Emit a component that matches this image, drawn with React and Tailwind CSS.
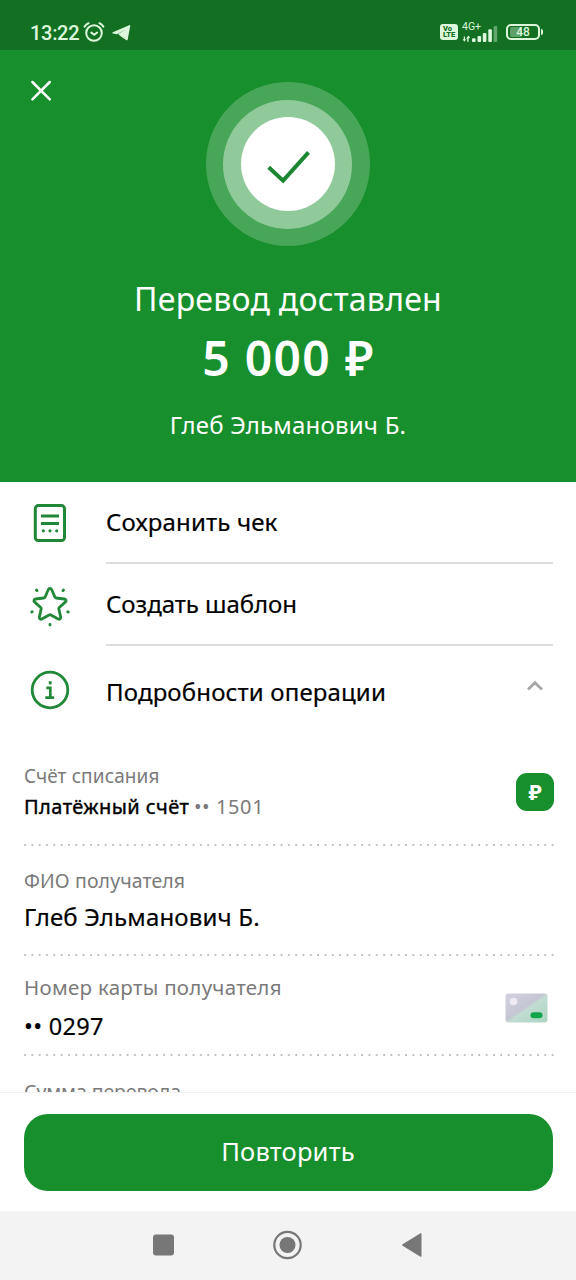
import React from "react";

function StatusBar() {
  return (
    <div className="flex h-[50px] shrink-0 items-start justify-between bg-[#137023] pl-[30px] pr-[33px] pt-[20px] text-[#dcf7dc]">
      <div className="flex h-6 items-center">
        <span className="w-[53px] whitespace-nowrap pt-px font-[Roboto] text-[20px] font-medium leading-6 tracking-[-0.3px]">13:22</span>
        <svg className="mt-[-1px] h-[22px] w-[22px]" viewBox="0 0 22 22" fill="none" stroke="currentColor" strokeWidth="2" strokeLinecap="round">
          <circle cx="11" cy="12" r="7.8" />
          <path d="M8.3 11.6l2.9 2.1 3-2.2M1.6 5.6A10 10 0 0 1 5.6 2.2M20.4 5.6a10 10 0 0 0-4-3.4" />
        </svg>
        <svg className="ml-[7px] mt-px h-[18px] w-[19px]" viewBox="0 0 19 18" fill="currentColor">
          <path d="M.8 8.3 17.2 1.2c.7-.3 1.2.1 1 .9l-2.5 13.3c-.2.9-.8 1.1-1.5.6l-4.9-3.3L6.1 10 14 5.2 4.9 10.3.8 9.4c-.6-.3-.6-.8 0-1.1z" />
        </svg>
      </div>
      <div className="flex h-6 items-center">
        <div className="flex h-[16px] w-[18px] flex-col items-center justify-center rounded-[3px] bg-[#dcf7dc] font-[Roboto] text-[7.5px] font-black leading-[6.5px] text-[#137023]">
          <span className="self-start pl-[3px]">Vo</span>
          <span>LTE</span>
        </div>
        <div className="ml-[4px] flex h-[22px] w-[37px] flex-col">
          <span className="h-[8px] whitespace-nowrap font-[Roboto] text-[10.5px] leading-[12px]">4G+</span>
          <svg className="mt-[-4px] h-[18px] w-[37px] shrink-0" viewBox="0 0 37 18" fill="currentColor">
            <path d="M1.8 11.5h1.2v2.8h1.2l-1.8 2.4-1.8-2.4h1.2zM5.2 16.7v-2.8H4.6V13l1.8-2.4L8.2 13H6.6v3.7z" />
            <rect x="10" y="13.2" width="3.6" height="3.8" rx="1" />
            <rect x="15.5" y="11" width="3.6" height="6" rx="1" />
            <rect x="20.8" y="8" width="3.6" height="9" rx="1" />
            <rect x="26.3" y="4.2" width="3.6" height="12.8" rx="1" />
            <rect x="31.6" y="1" width="3.6" height="16" rx="1" opacity=".4" />
          </svg>
        </div>
        <div className="ml-[7px] flex items-center">
          <div className="relative flex h-[16px] w-[34px] items-center justify-center rounded-[5px] border-2 border-[#dcf7dc]">
            <div className="absolute left-[2px] top-[1px] h-[10px] w-[12px] rounded-[2px] bg-[#5f9f68]" />
            <span className="relative font-[Roboto] text-[12px] font-medium leading-3">48</span>
          </div>
          <div className="ml-[1px] h-[6px] w-[2px] rounded-r bg-[#dcf7dc]" />
        </div>
      </div>
    </div>
  );
}

function Hero() {
  return (
    <header className="flex h-[432px] shrink-0 flex-col items-center bg-[#178f2c] text-white">
      <div className="flex w-full justify-between pl-[30px] pr-[31px] pt-[30px]">
        <svg className="h-[22px] w-[22px]" viewBox="0 0 22 22" fill="none" stroke="currentColor" strokeWidth="2.5" strokeLinecap="round">
          <path d="M2.4 2 19.8 19.4M19.8 2 2.4 19.4" />
        </svg>
        <div className="mt-[2px] flex h-[164px] w-[164px] items-center justify-center rounded-full bg-[#47a658]">
          <div className="flex h-[129px] w-[129px] items-center justify-center rounded-full bg-[#90ca9a]">
            <div className="flex h-[94px] w-[94px] items-center justify-center rounded-full bg-white">
              <svg className="h-[94px] w-[94px]" viewBox="0 0 94 94" fill="none" stroke="#1c8733" strokeWidth="4">
                <path d="M27.7 50.3 42.1 63.6 67.5 35.3" />
              </svg>
            </div>
          </div>
        </div>
        <div className="w-[22px]" />
      </div>
      <h1 className="mt-[33px] whitespace-nowrap text-[32px] leading-[40px] tracking-[0.25px]">
        <span>Перевод доставлен</span>
      </h1>
      <p className="mt-[9px] whitespace-nowrap pl-px text-[48px] font-semibold leading-[60px] tracking-[1.3px]">
        <span>5 000 ₽</span>
      </p>
      <p className="mt-[22px] whitespace-nowrap text-[24px] leading-[30px] tracking-[0.22px]">
        <span>Глеб Эльманович Б.</span>
      </p>
    </header>
  );
}

function ReceiptIcon() {
  return (
    <svg className="h-[40px] w-[40px]" viewBox="0 0 40 40" fill="none" stroke="#218838" strokeWidth="3">
      <rect x="5.3" y="2.6" width="29.2" height="35" rx="3" />
      <path d="M11 13h18M11 20.5h18" />
      <path d="M13.3 27.8h.01M20 27.8h.01M26.7 27.8h.01" strokeLinecap="round" strokeWidth="3.2" />
    </svg>
  );
}

function StarIcon() {
  return (
    <svg className="h-[40px] w-[40px]" viewBox="0 0 40 40" fill="none" stroke="#218838" strokeLinecap="round" strokeLinejoin="round" strokeWidth="2.8">
      <path d="M18.4 2.5c.6-1.4 2.6-1.4 3.2 0l3.4 7.7c.2.5.6.7 1.1.8l8.4 1c1.5.2 2.1 1.9 1 2.9l-6.2 5.6c-.4.4-.6.9-.5 1.4l1.9 8.2c.3 1.5-1.2 2.6-2.5 1.9l-7.3-4c-.6-.3-1.2-.3-1.8 0l-7.3 4c-1.3.7-2.8-.4-2.5-1.9l1.9-8.2c.1-.5-.1-1-.5-1.4L4.5 14.9c-1.1-1-.5-2.7 1-2.9l8.4-1c.5-.1.9-.3 1.1-.8z" />
      <path d="M6.5 3l.5.6M33.5 3l-.5.6M1.7 25.1l.5-.3M38.3 25.1l-.5-.3M20 37.3v.8" strokeWidth="2.8" />
    </svg>
  );
}

function InfoIcon() {
  return (
    <svg className="h-[40px] w-[40px]" viewBox="0 0 40 40" fill="none" stroke="#218838" strokeWidth="2.8">
      <circle cx="20" cy="20" r="17.8" />
      <path d="M16.3 17.8h4v9.8M15.3 27.6h8.8" strokeWidth="2.7" />
      <path d="M20.2 11.2v3.2" strokeWidth="2.8" />
    </svg>
  );
}

const dotted =
  "ml-[0.5px] h-[2px] w-[530px] shrink-0 bg-[radial-gradient(circle_at_1px_1px,#b4b4b4_0.6px,transparent_1.1px)] bg-[length:7.34px_2px]";

function Actions() {
  return (
    <div className="flex shrink-0 flex-col pl-[30px] pr-[23px]">
      <div className="flex h-[82px]">
        <div className="w-[76px] pt-[21px]"><ReceiptIcon /></div>
        <div className="flex-1 border-b-2 border-[#dedede] pt-[24px] text-[24px] leading-[32px] tracking-[0.15px] [-webkit-text-stroke:0.2px]">
          <span>Сохранить чек</span>
        </div>
      </div>
      <div className="flex h-[82px]">
        <div className="w-[76px] pt-[23px]"><StarIcon /></div>
        <div className="flex-1 border-b-2 border-[#dedede] pt-[24px] text-[24px] leading-[32px] tracking-[-0.05px] [-webkit-text-stroke:0.2px]">
          <span>Создать шаблон</span>
        </div>
      </div>
      <div className="flex h-[117px]">
        <div className="w-[76px] pt-[24px]"><InfoIcon /></div>
        <div className="flex-1 whitespace-nowrap pt-[30px] text-[24px] leading-[32px] tracking-[0.15px] [-webkit-text-stroke:0.2px]">
          <span>Подробности операции</span>
        </div>
        <svg className="mr-[9px] mt-[34px] h-[12px] w-[18px]" viewBox="0 0 18 12" fill="none" stroke="#a6a6a6" strokeWidth="2.8">
          <path d="M2 9.5 9 2.8l7 6.7" />
        </svg>
      </div>
    </div>
  );
}

function Details() {
  return (
    <div className="flex h-[330px] shrink-0 flex-col overflow-hidden whitespace-nowrap pl-[23px] pr-[22px]">
      <div className="flex h-[81px] shrink-0 justify-between">
        <div className="flex flex-col pl-px">
          <div className="text-[19px] leading-[26px] tracking-[0.12px] text-[#7a7a7a]"><span>Счёт списания</span></div>
          <div className="mt-[5px] flex text-[20px] leading-[26px]">
            <span className="w-[167px] tracking-[0.45px] [-webkit-text-stroke:0.4px]">Платёжный счёт</span>
            <span className="ml-[3px] tracking-[0.6px] text-[#7a7a7a]">•• 1501</span>
          </div>
        </div>
        <div className="mt-[10px] flex h-[38px] w-[38px] items-center justify-center rounded-[11px] bg-[#178f2c] pb-[2px] text-[22px] font-bold leading-none text-white">₽</div>
      </div>
      <div className={dotted} />
      <div className="flex h-[108px] shrink-0 flex-col pl-px pt-[22px]">
        <div className="text-[19.5px] leading-[26px] tracking-[0.1px] text-[#7a7a7a]"><span>ФИО получателя</span></div>
        <div className="mt-[7px] text-[24px] leading-[32px] tracking-[0.18px] [-webkit-text-stroke:0.2px]"><span>Глеб Эльманович Б.</span></div>
      </div>
      <div className={dotted} />
      <div className="flex h-[98px] shrink-0 justify-between pt-[18px]">
        <div className="flex flex-col pl-px">
          <div className="text-[20.5px] leading-[26px] tracking-[0.28px] text-[#7a7a7a]"><span>Номер карты получателя</span></div>
          <div className="mt-[10px] text-[23.5px] leading-[32px] tracking-[0.3px] [-webkit-text-stroke:0.2px]"><span>•• 0297</span></div>
        </div>
        <svg className="mr-[6px] mt-[19px] h-[30px] w-[43px]" viewBox="0 0 43 30">
          <defs>
            <linearGradient id="card" x1="0" y1="0" x2="1" y2="1">
              <stop offset="0" stopColor="#d3d1e0" />
              <stop offset=".47" stopColor="#c5c6d3" />
              <stop offset=".53" stopColor="#c2dcd2" />
              <stop offset="1" stopColor="#a9d4c1" />
            </linearGradient>
          </defs>
          <rect x=".5" y=".5" width="42" height="29" rx="3" fill="url(#card)" />
          <circle cx="8.5" cy="8.5" r="3.8" fill="#edeaf4" />
          <rect x="25.5" y="19.3" width="12" height="6" rx="3" fill="#12a44a" />
        </svg>
      </div>
      <div className={dotted} />
      <div className="shrink-0 pl-px pt-[23px] text-[19.5px] leading-[26px] tracking-[-0.1px] text-[#7a7a7a]"><span>Сумма перевода</span></div>
    </div>
  );
}

function NavBar() {
  return (
    <nav className="flex h-[69px] shrink-0 items-center justify-center gap-[94.5px] bg-[#f3f3f3] pb-px">
      <svg className="h-[30px] w-[30px]" viewBox="0 0 30 30"><rect x="4" y="4.5" width="21" height="21" rx="3" fill="#777" /></svg>
      <svg className="h-[30px] w-[30px]" viewBox="0 0 30 30">
        <circle cx="14.5" cy="15" r="13.2" fill="none" stroke="#777" strokeWidth="2.2" />
        <circle cx="14.5" cy="15" r="8" fill="#777" />
      </svg>
      <svg className="h-[30px] w-[30px]" viewBox="0 0 30 30">
        <path d="M4.6 14.2 22.5 3.3q1-.5 1 .6v22.2q0 1.1-1 .6L4.6 15.8q-1.2-.8 0-1.6z" fill="#777" />
      </svg>
    </nav>
  );
}

export default function App() {
  return (
    <div className="flex h-[1280px] w-[576px] flex-col overflow-hidden bg-white font-['Noto_Sans',sans-serif] text-black">
      <StatusBar />
      <Hero />
      <Actions />
      <Details />
      <div className="mt-[-1px] h-[119px] shrink-0 border-t border-[#f2f2f2] px-[23.5px] pt-[20.5px]">
        <button className="flex h-[77px] w-[529px] items-center justify-center rounded-[24px] bg-[#178f2c] pb-[2px] text-[25.5px] leading-[32px] tracking-[0.2px] text-white">
          <span>Повторить</span>
        </button>
      </div>
      <NavBar />
    </div>
  );
}
